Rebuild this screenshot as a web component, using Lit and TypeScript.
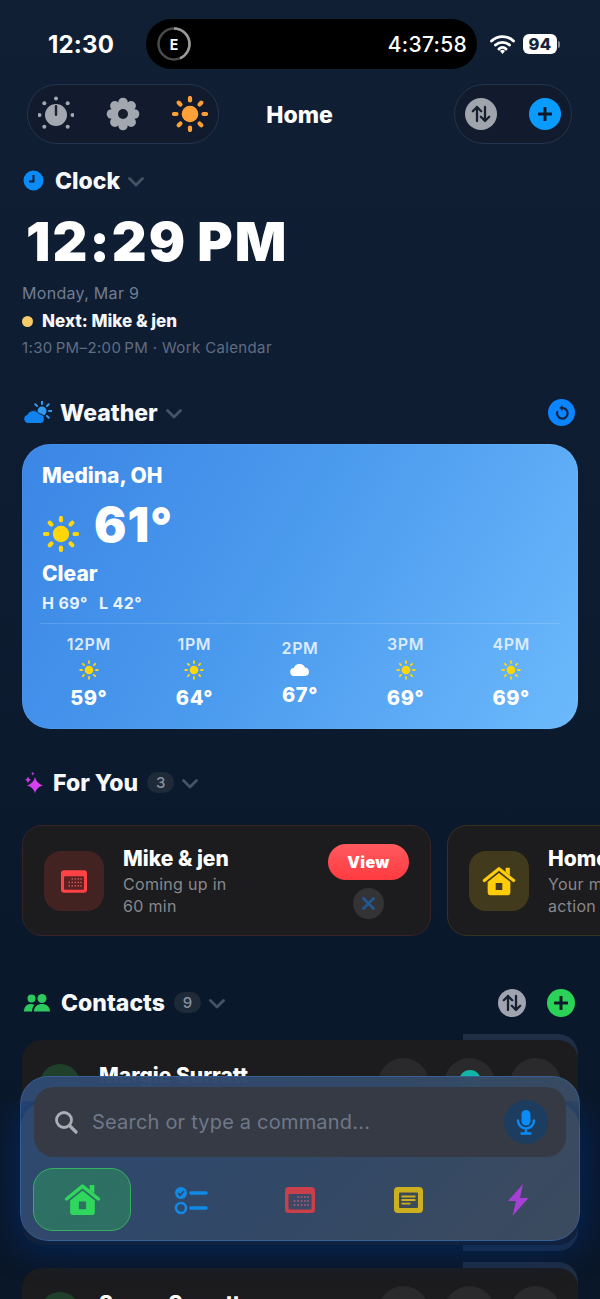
import { LitElement, html, css, svg } from "lit";
import { customElement } from "lit/decorators.js";

const rays = (cx: number, cy: number, r1: number, r2: number, w: number, color: string) =>
  [0, 45, 90, 135, 180, 225, 270, 315].map((a) => {
    const t = (a * Math.PI) / 180;
    return svg`<line x1=${cx + r1 * Math.cos(t)} y1=${cy + r1 * Math.sin(t)} x2=${cx + r2 * Math.cos(t)} y2=${cy + r2 * Math.sin(t)} stroke=${color} stroke-width=${w} stroke-linecap="round"/>`;
  });

const sun = (size: number, color: string, inner = 8.2, r1 = 13.5, r2 = 16, w = 4.2) => html`<svg width=${size} height=${size} viewBox="0 0 36 36"><circle cx="18" cy="18" r=${inner} fill=${color}></circle>${rays(18, 18, r1, r2, w, color)}</svg>`;

const chevron = html`<svg class="chev" width="16" height="10" viewBox="0 0 16 10"><path d="M1.5 1.5 8 8l6.5-6.5" fill="none" stroke="#465265" stroke-width="2.8" stroke-linecap="round" stroke-linejoin="round"/></svg>`;

const sortIcon = (bg: string, size: number) => html`<span class="round" style="background:${bg};width:${size}px;height:${size}px"><svg width="20" height="18" viewBox="0 0 20 18"><path d="M6 16V2M1.8 6.2 6 2l4.2 4.2M14 2v14M9.8 11.8 14 16l4.2-4.2" fill="none" stroke="#16202e" stroke-width="2.3" stroke-linecap="round" stroke-linejoin="round"/></svg></span>`;

const plusIcon = (bg: string, size: number) => html`<span class="round" style="background:${bg};width:${size}px;height:${size}px"><svg width="14" height="14" viewBox="0 0 14 14"><path d="M7 1v12M1 7h12" fill="none" stroke="#0f1b2b" stroke-width="3" stroke-linecap="round"/></svg></span>`;

const houseIcon = (color: string, w: number) => html`<svg width=${w} height=${w} viewBox="0 0 36 36"><path d="M2.5 17.5 18 5l15.500 12.500" fill="none" stroke=${color} stroke-width="3.400" stroke-linecap="round" stroke-linejoin="round"/><path d="M25 4h4.500v8L25 8.500Z" fill=${color}/><path fill-rule="evenodd" d="M18 9.500 30 19v11.500a2.500 2.500 0 0 1-2.500 2.500h-19A2.500 2.500 0 0 1 6 30.500V19ZM14.500 20v7.500h7V20Z" fill=${color}/></svg>`;

const calendarIcon = (bg: string, inner: string, dots: string, w: number, h: number) => html`<svg width=${w} height=${h} viewBox="0 0 30 26"><rect width="30" height="26" rx="3.500" fill=${bg}/><rect x="3.500" y="7" width="23" height="15.500" rx="1" fill=${inner}/>${[9.5, 13, 16.5, 20, 23].flatMap((x, i) => [10, 14, 18].map((y) => (i === 0 && y < 14 ? "" : svg`<rect x=${x - 0.8} y=${y - 0.8} width="1.700" height="1.700" fill=${dots}/>`)))}</svg>`;

const hours = [
  { t: "12PM", d: "59°", s: true },
  { t: "1PM", d: "64°", s: true },
  { t: "2PM", d: "67°", s: false },
  { t: "3PM", d: "69°", s: true },
  { t: "4PM", d: "69°", s: true },
];

@customElement("app-root")
export class AppRoot extends LitElement {
  static styles = css`
    :host { display: block; width: 600px; height: 1299px; overflow: hidden; position: relative; font-family: Inter, "Liberation Sans", sans-serif; color: #fff; background: linear-gradient(180deg, #111f35 0%, #0e1c31 40%, #0a182c 75%, #0a1729 100%); }
    * { box-sizing: border-box; }
    .round { display: inline-flex; align-items: center; justify-content: center; border-radius: 50%; flex: none; }
    .status { display: flex; align-items: center; padding: 19px 0 0 48px; height: 69px; }
    .clock-s { font-size: 24px; font-weight: 700; width: 66px; margin-right: 32px; letter-spacing: 0.2px; }
    .island { width: 331px; height: 50px; border-radius: 25px; background: #000; display: flex; align-items: center; justify-content: space-between; padding: 0 10px; margin-right: 13px; }
    .ring { position: relative; width: 36px; height: 36px; display: flex; align-items: center; justify-content: center; font-size: 14px; font-weight: 700; }
    .ring svg { position: absolute; inset: 0; }
    .countdown { font-size: 21px; font-weight: 500; letter-spacing: 0.3px; }
    .wifi { margin-right: 8px; display: block; }
    .battery { display: flex; align-items: center; }
    .bat { width: 34px; height: 20px; border-radius: 6px; background: #fff; color: #16233a; font-size: 16.500px; font-weight: 800; display: flex; align-items: center; justify-content: center; letter-spacing: 0.3px; }
    .nib { width: 2px; height: 7px; background: #7a8595; border-radius: 0 2px 2px 0; margin-left: 1px; }
    .nav { display: flex; align-items: center; justify-content: space-between; margin: 15px 28px 0 27px; height: 60px; position: relative; }
    .pill { height: 60px; border-radius: 30px; background: #111b2d; border: 1px solid #23344f; display: flex; align-items: center; }
    .pill.l { width: 192px; padding: 0 10px; justify-content: space-between; }
    .pill.r { width: 118px; padding: 0 10px 0 10px; justify-content: space-between; }
    .title { font-size: 23px; font-weight: 800; position: absolute; left: 0; right: 0; top: 16px; line-height: 30px; text-align: center; pointer-events: none; }
    .main { padding: 0 22px; }
    .head { display: flex; align-items: center; height: 28px; padding-top: 1px; font-size: 23px; font-weight: 800; color: #f6f8fb; }
    .head .ic { flex: none; display: flex; align-items: center; }
    .head .chev { margin-left: 8px; margin-top: 2px; }
    .head .spacer { flex: 1; }
    .count { width: 27px; height: 21px; border-radius: 11px; background: #1f2a39; color: #8791a0; font-size: 15px; font-weight: 500; display: flex; align-items: center; justify-content: center; margin-left: 9px; }
    .clock-h { margin-top: 22px; }
    .time { font-size: 54px; font-weight: 900; line-height: 60px; margin: 18px 0 0 4px; letter-spacing: 2.100px; word-spacing: -3px; white-space: nowrap; }
    .date { font-size: 16px; line-height: 20px; color: #6f7d93; margin-top: 11px; letter-spacing: 0.3px; }
    .next { display: flex; align-items: center; height: 22px; margin-top: 7px; font-size: 17px; font-weight: 800; color: #f4f6f9; }
    .dot { width: 11px; height: 11px; border-radius: 50%; background: #f6cb68; margin-right: 9px; }
    .sub { font-size: 15px; line-height: 20px; color: #5f6d83; margin-top: 6px; letter-spacing: 0.36px; }
    .weather-h { margin-top: 40px; }
    .refresh { width: 27px; height: 27px; margin-right: 3px; background: #0a84ff; }
    .wcard { margin-top: 18px; height: 285px; border-radius: 28px; background: linear-gradient(120deg, #3b86e5 0%, #4a9aee 45%, #6cb9fc 100%); padding: 19px 20px 0; box-shadow: inset 0 0 0 1px rgba(255,255,255,.05); }
    .city { font-size: 21px; font-weight: 800; line-height: 26px; }
    .now { display: flex; align-items: center; height: 60px; margin-top: 12px; }
    .now svg { margin: 5px 15px 0 1px; }
    .deg { font-size: 48px; font-weight: 900; line-height: 60px; position: relative; top: -6px; letter-spacing: 1px; }
    .cond { font-size: 21px; font-weight: 800; line-height: 26px; }
    .hl { font-size: 16px; font-weight: 700; line-height: 20px; margin-top: 6px; color: #e8f2fe; letter-spacing: 0.4px; }
    .hl span { margin-right: 11px; }
    .rule { height: 1px; background: rgba(255,255,255,.14); margin: 10px -2px 0; }
    .hours { display: grid; grid-template-columns: repeat(5, 1fr); margin: 0 -6px; height: 98px; align-items: center; }
    .hr { display: flex; flex-direction: column; align-items: center; }
    .hr .t { font-size: 16px; font-weight: 600; line-height: 20px; color: #dcebfd; letter-spacing: 0.6px; }
    .hr .i { height: 22px; margin: 5px 0 3px; display: flex; align-items: center; justify-content: center; }
    .hr.cl .i { height: 14px; margin: 5px 0 4px; }
    .hr .d { font-size: 20px; font-weight: 800; line-height: 28px; letter-spacing: 0.6px; }
    .foryou-h { margin-top: 39px; }
    .foryou-h .ic { margin: 0 9px 0 2px; }
    .cards { display: flex; gap: 16px; margin-top: 29px; width: 900px; }
    .card { flex: none; width: 409px; height: 111px; border-radius: 20px; background: #1c1c1e; border: 1px solid #3a2327; display: flex; align-items: flex-start; padding: 25px 21px 0; position: relative; }
    .card.y { border-color: #33331f; }
    .tile { width: 60px; height: 60px; border-radius: 17px; background: #432222; display: flex; align-items: center; justify-content: center; flex: none; margin-right: 19px; }
    .card.y .tile { background: #423a1c; }
    .txt { margin-top: -5px; flex: 1; min-width: 0; }
    .txt b { display: block; font-size: 21px; font-weight: 800; line-height: 26px; white-space: nowrap; margin-bottom: 1px; }
    .txt span { display: block; font-size: 16px; line-height: 22px; color: #88888c; letter-spacing: 0.3px; white-space: nowrap; }
    .acts { display: flex; flex-direction: column; align-items: center; margin-top: -7px; }
    .view { width: 81px; height: 36px; border-radius: 18px; background: linear-gradient(180deg, #ff5a5f, #ff3b40); font-size: 16px; font-weight: 900; letter-spacing: 0.4px; display: flex; align-items: center; justify-content: center; }
    .close { width: 31px; height: 31px; margin-top: 8px; background: #333336; }
    .contacts-h { margin-top: 52px; }
    .contacts-h .ic { margin: 0 11px 0 2px; }
    .contacts-h .round + .round { margin-left: 21px; }
    .contacts-h .end { margin-right: 3px; display: flex; }
    .contact { position: relative; height: 205px; border-radius: 20px; background: #1c1c1e; display: flex; align-items: flex-start; padding: 18px 17px 0 18px; }
    .contact::before { content: ""; position: absolute; right: 0; top: -6px; bottom: -6px; width: 115px; background: #1f2e44; border-radius: 0 20px 20px 0; z-index: -1; }
    .list { margin-top: 24px; display: flex; flex-direction: column; gap: 23px; position: relative; z-index: 0; }
    .avatar { width: 40px; height: 40px; border-radius: 50%; background: #20402c; margin-top: 6px; flex: none; }
    .cname { font-size: 21px; font-weight: 800; margin-left: 19px; margin-top: 5px; flex: 1; line-height: 26px; }
    .btn { width: 51px; height: 51px; background: #2a2a2c; margin-left: 15px; }
    .teal { margin-bottom: 5px; }
    .dock { position: absolute; left: 20px; top: 1076px; width: 560px; height: 165px; border-radius: 28px; border: 1.500px solid #3a5f93; background: linear-gradient(135deg, rgba(47,74,116,.96), rgba(50,74,106,.96) 50%, rgba(62,77,96,.97)); backdrop-filter: blur(30px); padding: 10px 13px 0; }
    .dock::before { content: ""; position: absolute; inset: 24px -1px -1px; border-radius: 28px; box-shadow: 0 6px 30px 6px rgba(0,44,110,.62); clip-path: inset(0 -70px -70px -70px); z-index: -1; }
    .search { height: 70px; border-radius: 20px; background: #363a45; display: flex; align-items: center; padding: 0 18px 0 20px; }
    .search svg { flex: none; }
    .ph { flex: 1; margin-left: 14px; font-size: 20px; color: #6f7888; letter-spacing: 0.2px; }
    .mic { width: 44px; height: 44px; background: #1c3d5f; }
    .tabs { display: grid; grid-template-columns: repeat(5, 109px); margin: 11px 0 0 -7px; height: 63px; }
    .tab { display: flex; align-items: center; justify-content: center; }
    .tab.on { margin: 0 5px 0 6px; border-radius: 20px; background: rgba(46,170,90,.42); border: 1.500px solid #36b060; }
  `;

  render() {
    return html`
      <div class="status">
        <div class="clock-s">12:30</div>
        <div class="island">
          <div class="ring"><svg viewBox="0 0 36 36"><circle cx="18" cy="18" r="15.500" fill="none" stroke="#4a4a4a" stroke-width="2.500"/><path d="M18 2.500A15.500 15.500 0 0 1 24 32.300" fill="none" stroke="#9a9a9a" stroke-width="2.500"/></svg>E</div>
          <div class="countdown">4:37:58</div>
        </div>
        <svg class="wifi" width="25" height="20" viewBox="0 0 25 20"><path d="M1.500 7A16 16 0 0 1 23.500 7M5.500 11A10.500 10.500 0 0 1 19.500 11M9 15a5 5 0 0 1 7 0" fill="none" stroke="#fff" stroke-width="2.900" stroke-linecap="round"/><path d="M12.500 20l-2.500-3a3.500 3.500 0 0 1 5 0Z" fill="#fff"/></svg>
        <div class="battery"><div class="bat">94</div><div class="nib"></div></div>
      </div>

      <div class="nav">
        <div class="pill l">
          <svg width="36" height="36" viewBox="0 0 36 36">
            <circle cx="18" cy="19" r="11" fill="#a3a7af"/>
            <rect x="16.800" y="9" width="2.400" height="11" rx="1.200" fill="#1a2230"/>
            ${[0, 45, 90, 135, 180, 225, 270, 315].map((a) => {
              const t = ((a - 90) * Math.PI) / 180;
              return a === 180 ? "" : svg`<circle cx=${18 + 16.5 * Math.cos(t)} cy=${19 + 16.5 * Math.sin(t)} r="2" fill="#a3a7af"/>`;
            })}
          </svg>
          <svg width="34" height="34" viewBox="0 0 34 34">
            ${[0, 45, 90, 135, 180, 225, 270, 315].map((a) => svg`<circle cx="17" cy="5.500" r="4.800" fill="#a3a7af" transform="rotate(${a} 17 17)"/>`)}
            <circle cx="17" cy="17" r="11.500" fill="#a3a7af"/><circle cx="17" cy="17" r="5" fill="#151d2c"/>
          </svg>
          ${sun(36, "#ff9f38", 8.3)}
        </div>
        <div class="title">Home</div>
        <div class="pill r">${sortIcon("#a0a4ac", 32)}${plusIcon("#0a9bff", 32)}</div>
      </div>

      <div class="main">
        <div class="head clock-h">
          <span class="ic" style="margin:0 11px 0 1px"><svg width="21" height="21" viewBox="0 0 21 21"><circle cx="10.500" cy="10.500" r="10" fill="#0a8bf5"/><path d="M10.500 5v6.500H6" fill="none" stroke="#0f1d33" stroke-width="2"/></svg></span>
          Clock${chevron}
        </div>
        <div class="time">12:29 PM</div>
        <div class="date">Monday, Mar 9</div>
        <div class="next"><span class="dot"></span>Next: Mike &amp; jen</div>
        <div class="sub">1:30&#8239;PM–2:00&#8239;PM · Work Calendar</div>

        <div class="head weather-h">
          <span class="ic" style="margin-right:8px"><svg width="30" height="24" viewBox="0 0 30 24"><circle cx="20" cy="10" r="4.500" fill="#2f9bf2"/><g>${rays(20, 10, 7, 9.500, 2, "#2f9bf2")}</g><path d="M6 22.500a4.500 4.500 0 0 1-1-8.800A7 7 0 0 1 17.500 13a4.800 4.800 0 0 1 1 9.500Z" fill="#0f84f0" stroke="#0f1d33" stroke-width="1"/></svg></span>
          Weather${chevron}
          <span class="spacer"></span>
          <span class="round refresh"><svg width="16" height="16" viewBox="0 0 16 16"><path d="M8.500 3A5.300 5.300 0 1 1 3.200 7" fill="none" stroke="#10243f" stroke-width="2.200" stroke-linecap="round"/><path d="M8.500 0 5.500 3 8.500 6Z" fill="#10243f"/></svg></span>
        </div>

        <div class="wcard">
          <div class="city">Medina, OH</div>
          <div class="now">${sun(36, "#ffd60a", 8.2)}<span class="deg">61°</span></div>
          <div class="cond">Clear</div>
          <div class="hl"><span>H 69°</span>L 42°</div>
          <div class="rule"></div>
          <div class="hours">
            ${hours.map(
              (h) => html`<div class="hr ${h.s ? "" : "cl"}">
                <div class="t">${h.t}</div>
                <div class="i">${h.s
                  ? sun(20, "#ffd60a", 7.800, 12.500, 15.800, 3.200)
                  : html`<svg width="20" height="13" viewBox="0 0 20 13"><path d="M4.500 13a4 4 0 0 1-.6-8A6 6 0 0 1 15 4.500 4.300 4.300 0 0 1 15.500 13Z" fill="#fff"/></svg>`}</div>
                <div class="d">${h.d}</div>
              </div>`
            )}
          </div>
        </div>

        <div class="head foryou-h">
          <span class="ic"><svg width="20" height="22" viewBox="0 0 20 22"><path d="M11 5Q12.500 11.500 19 13.500 12.500 15 11 21.500 9.500 15 3 13.500 9.500 11.500 11 5Z" fill="#d83ff0"/><path d="M4 4.500Q4.700 7 7 7.800 4.700 8.500 4 11 3.300 8.500 1 7.800 3.300 7 4 4.500Z" fill="#c43ae0"/><path d="M8.800 0Q9.200 1.300 10.500 1.700 9.200 2.100 8.800 3.400 8.400 2.100 7.100 1.700 8.400 1.300 8.800 0Z" fill="#c43ae0"/></svg></span>
          For You<span class="count">3</span>${chevron}
        </div>
        <div class="cards">
          <div class="card">
            <div class="tile">${calendarIcon("#ff4245", "#5c2123", "#c9585a", 26, 23)}</div>
            <div class="txt"><b>Mike &amp; jen</b><span>Coming up in</span><span>60 min</span></div>
            <div class="acts">
              <div class="view">View</div>
              <span class="round close"><svg width="13" height="13" viewBox="0 0 13 13"><path d="M1.500 1.500l10 10M11.500 1.500l-10 10" stroke="#24578f" stroke-width="2.800" stroke-linecap="round"/></svg></span>
            </div>
          </div>
          <div class="card y">
            <div class="tile">${houseIcon("#ffcc0a", 34)}</div>
            <div class="txt"><b>Home Maintenance</b><span>Your maintenance</span><span>action items</span></div>
          </div>
        </div>

        <div class="head contacts-h">
          <span class="ic"><svg width="26" height="18" viewBox="0 0 26 18"><circle cx="7.500" cy="4.500" r="4" fill="#2cc95f"/><circle cx="18" cy="4.500" r="4.500" fill="#2cc95f"/><path d="M0 17.500c0-5 3-7.500 7-7.500 1.400 0 2.500.3 3.400.8C8.800 12.800 8 15 8 17.500ZM10 17.500c0-5 3.500-7.500 8-7.500s8 2.500 8 7.500Z" fill="#2cc95f"/></svg></span>
          Contacts<span class="count">9</span>${chevron}
          <span class="spacer"></span>
          <span class="end">${sortIcon("#a0a4b0", 28)}${plusIcon("#2cd158", 28)}</span>
        </div>

        <div class="list">
          <div class="contact">
            <div class="avatar"></div>
            <div class="cname">Margie Surratt</div>
            <span class="round btn"></span>
            <span class="round btn"><svg class="teal" width="22" height="22" viewBox="0 0 22 22"><circle cx="11" cy="11" r="11" fill="#12b5a5"/></svg></span>
            <span class="round btn"></span>
          </div>
          <div class="contact">
            <div class="avatar"></div>
            <div class="cname">Susan Surratt</div>
            <span class="round btn"></span>
            <span class="round btn"></span>
            <span class="round btn"></span>
          </div>
        </div>
      </div>

      <div class="dock">
        <div class="search">
          <svg width="24" height="24" viewBox="0 0 24 24"><circle cx="10" cy="10" r="7.500" fill="none" stroke="#a9adb5" stroke-width="2.800"/><path d="M15.500 15.500 22 22" stroke="#a9adb5" stroke-width="3.200" stroke-linecap="round"/></svg>
          <div class="ph">Search or type a command...</div>
          <span class="round mic"><svg width="20" height="26" viewBox="0 0 20 26"><rect x="5.500" y="1" width="9" height="15.500" rx="4.500" fill="#0a8bf5"/><path d="M2 11.500a8 8 0 0 0 16 0M10 19.500V24M5.500 24.500h9" fill="none" stroke="#0a8bf5" stroke-width="2.400" stroke-linecap="round"/></svg></span>
        </div>
        <div class="tabs">
          <div class="tab on">${houseIcon("#2fd75c", 37)}</div>
          <div class="tab"><svg width="34" height="30" viewBox="0 0 34 30"><circle cx="7" cy="8" r="6" fill="#118ae6"/><path d="M4.200 8.200 6.200 10.200 10 6" fill="none" stroke="#2f486a" stroke-width="1.700"/><circle cx="7" cy="23" r="5" fill="none" stroke="#118ae6" stroke-width="2.600"/><path d="M17 8h15M17 23h15" stroke="#118ae6" stroke-width="3.600" stroke-linecap="round"/></svg></div>
          <div class="tab">${calendarIcon("#c9404a", "#3d4766", "#a85a74", 30, 26)}</div>
          <div class="tab"><svg width="29" height="26" viewBox="0 0 29 26"><rect width="29" height="26" rx="4" fill="#cdb01f"/><rect x="5" y="5.500" width="19" height="15.500" rx="1" fill="#3d4a58"/><path d="M7.500 9.500h14M7.500 13h14M7.500 16.700h9" stroke="#cdb01f" stroke-width="1.800"/></svg></div>
          <div class="tab"><svg width="22" height="32" viewBox="0 0 22 32"><path d="M16 0 1 17h8L5.500 32 21.500 14h-8.500Z" fill="#a63fd6"/></svg></div>
        </div>
      </div>
    `;
  }
}
